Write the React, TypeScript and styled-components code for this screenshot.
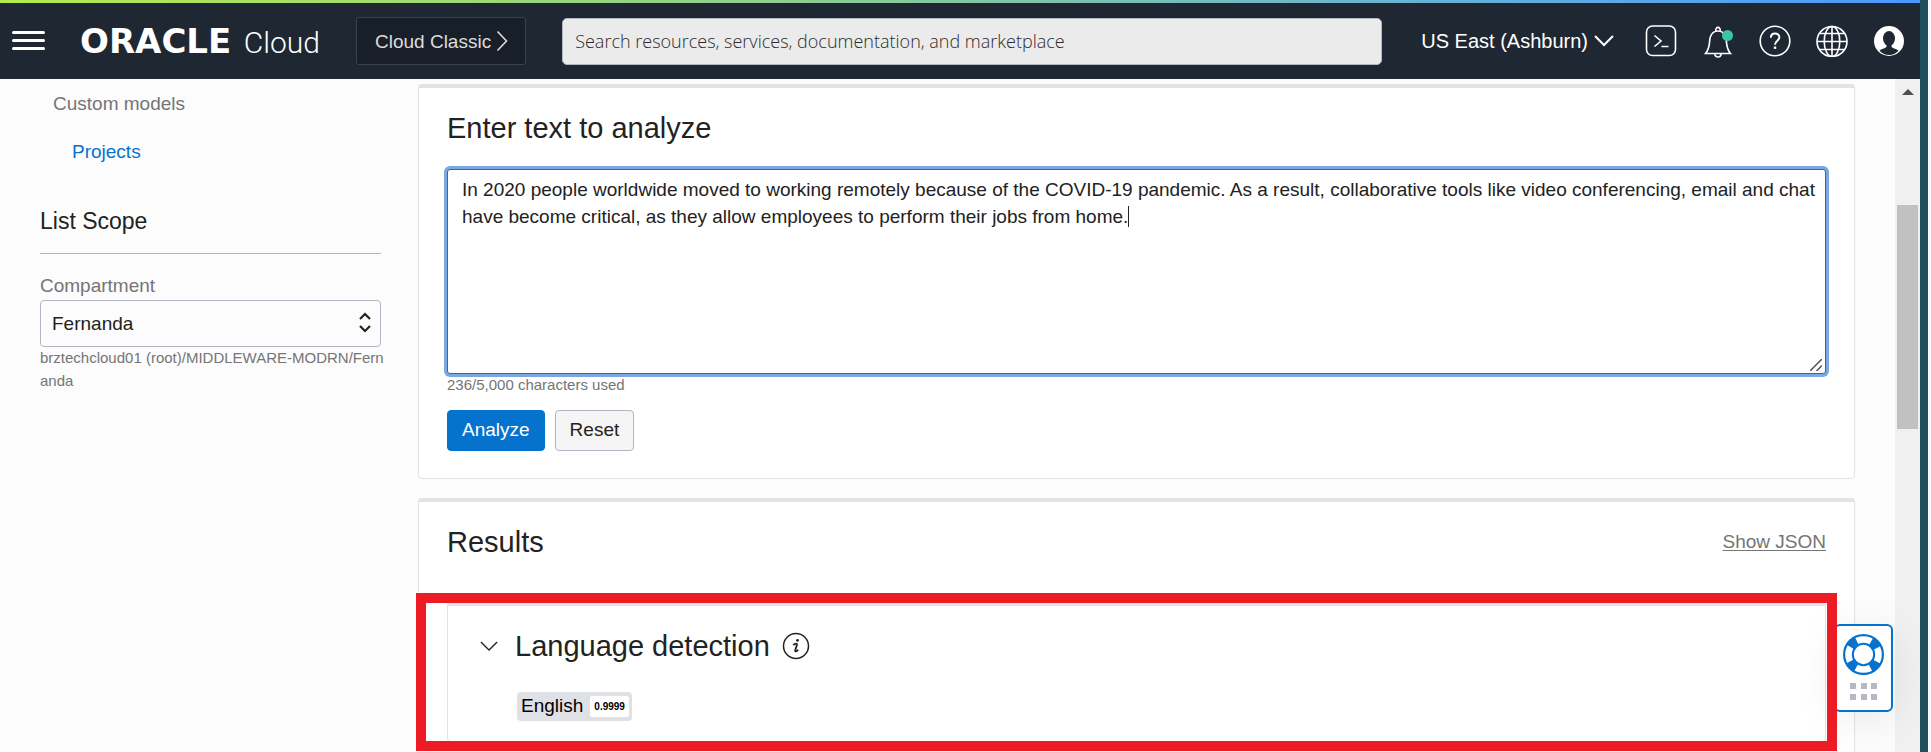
import React, { useState } from "react";
import styled, { createGlobalStyle } from "styled-components";

const color = {
  header: "#1e2732",
  page: "#fcfcfc",
  ink: "#222222",
  muted: "#757575",
  line: "#e2e2e7",
  field: "#b3b6c2",
  blue: "#0572ce",
  marker: "#ed1c24",
};

const GlobalStyle = createGlobalStyle`
  * { box-sizing: border-box; }
  body {
    margin: 0;
    background: ${color.page};
    color: ${color.ink};
    font-family: "Liberation Sans", Arial, sans-serif;
    font-size: 19px;
    line-height: 27px;
  }
  button, input, select, textarea { font: inherit; color: inherit; margin: 0; }
  h1, h2, h3, p { margin: 0; font-weight: 400; }
`;

const Screen = styled.div`
  display: flex;
  height: 100vh;
  overflow: hidden;
`;

const Browser = styled.div`
  flex: 1;
  min-width: 0;
  display: flex;
  flex-direction: column;
`;

const Desktop = styled.div`
  width: 11px;
  background: #fdfdfd;
  border-left: 8px solid #20505b;
`;

const LoadingStripe = styled.div`
  height: 3px;
  flex: none;
  background: linear-gradient(90deg, #b5ea4e, #8acb98 45%, #66b0d8 76%, #4a98fc);
`;

const Header = styled.header`
  flex: none;
  display: flex;
  align-items: center;
  height: 76px;
  padding: 0 15px 0 12px;
  background: ${color.header};
  color: #fff;
`;

const IconButton = styled.button`
  display: flex;
  width: 32px;
  height: 32px;
  padding: 0;
  border: 0;
  background: none;
  color: #fff;
  cursor: pointer;
`;

const MenuButton = styled(IconButton)`
  width: 33px;
  margin-right: 35px;
`;

const Brand = styled.a`
  display: flex;
  align-items: baseline;
  justify-content: space-between;
  width: 240px;
  height: 36px;
  line-height: 36px;
  color: #fff;
  text-decoration: none;
`;

const BrandName = styled.span`
  font-family: "DejaVu Sans", sans-serif;
  font-weight: 700;
  font-size: 34px;
`;

const BrandProduct = styled.span`
  font-family: Roboto, sans-serif;
  font-weight: 300;
  font-size: 30px;
`;

const ClassicButton = styled.button`
  display: flex;
  align-items: center;
  gap: 5px;
  height: 48px;
  margin: 0 36px;
  padding: 0 17px 0 18px;
  border: 1px solid #3a424b;
  border-radius: 3px;
  background: #191f28;
  color: #dcdcdc;
  white-space: nowrap;
`;

const Search = styled.input`
  flex: 1;
  min-width: 0;
  height: 47px;
  padding: 0 12px;
  border: 1px solid #b3b8c0;
  border-radius: 5px;
  background: #ebebeb;
  font-family: "Open Sans", sans-serif;
  font-size: 18px;
  font-weight: 300;
  &::placeholder { color: #2c2c2c; opacity: 1; }
`;

const RegionButton = styled.button`
  display: flex;
  align-items: center;
  gap: 6px;
  margin: 0 31px 0 39px;
  padding: 0;
  border: 0;
  background: none;
  color: #fff;
  font-size: 20px;
  white-space: nowrap;
`;

const Tools = styled.nav`
  display: flex;
  gap: 25px;
`;

const Body = styled.div`
  flex: 1;
  min-height: 0;
  display: flex;
`;

const Sidebar = styled.aside`
  flex: none;
  width: 410px;
  padding: 11px 29px 0 40px;
`;

const NavGroup = styled.p`
  padding-left: 13px;
  color: ${color.muted};
`;

const NavLink = styled.a`
  display: block;
  margin: 21px 0 0 32px;
  color: ${color.blue};
  text-decoration: none;
`;

const ScopeTitle = styled.h3`
  margin-top: 43px;
  padding-bottom: 18px;
  border-bottom: 1px solid ${color.field};
  font-size: 23px;
`;

const FieldLabel = styled.label`
  display: block;
  margin: 18px 0 1px;
  color: ${color.muted};
`;

const SelectWrap = styled.div`
  position: relative;
  svg {
    position: absolute;
    right: 10px;
    top: 12px;
    pointer-events: none;
  }
`;

const Select = styled.select`
  display: block;
  width: 100%;
  height: 47px;
  padding: 0 11px;
  border: 1px solid ${color.field};
  border-radius: 4px;
  background: ${color.page};
  appearance: none;
`;

const Hint = styled.p`
  margin-top: -1px;
  font-size: 15px;
  line-height: 23px;
  color: ${color.muted};
`;

const PathHint = styled(Hint)`
  margin-right: -5px;
  word-break: break-all;
`;

const Main = styled.main`
  flex: 1;
  min-width: 0;
  display: flex;
  flex-direction: column;
  gap: 19px;
  padding: 5px 40px 0 8px;
  overflow: hidden;
`;

const Panel = styled.section`
  flex: none;
  padding: 22px 28px 27px;
  border: 1px solid ${color.line};
  border-top-width: 4px;
  border-radius: 4px;
  background: #fff;
`;

const PanelHead = styled.div`
  display: flex;
  align-items: center;
  justify-content: space-between;
`;

const Title = styled.h2`
  font-size: 29px;
  line-height: 36px;
`;

const EditorWrap = styled.div`
  position: relative;
  margin-top: 23px;
`;

const Editor = styled.textarea`
  display: block;
  width: 100%;
  height: 205px;
  padding: 6px 0 6px 14px;
  border: 1px solid #146fcd;
  border-radius: 3px;
  outline: 0;
  box-shadow: 0 0 0 3px #7aa9e2;
  background: #fff;
  resize: vertical;
  &::-webkit-resizer { background: transparent; }
`;

const Caret = styled.span`
  position: absolute;
  left: 681px;
  top: 37px;
  width: 1px;
  height: 21px;
  background: ${color.ink};
`;

const ResizeMark = styled.svg`
  position: absolute;
  right: 4px;
  bottom: 3px;
  pointer-events: none;
`;

const Actions = styled.div`
  display: flex;
  gap: 10px;
  margin-top: 14px;
`;

const Button = styled.button<{ $primary?: boolean }>`
  height: 41px;
  padding: 0 14px 2px;
  border: 1px solid ${(p) => (p.$primary ? color.blue : color.field)};
  border-radius: 4px;
  background: ${(p) => (p.$primary ? color.blue : "#f5f5f5")};
  color: ${(p) => (p.$primary ? "#fff" : color.ink)};
`;

const JsonLink = styled.a`
  padding-bottom: 2px;
  color: ${color.muted};
  text-underline-offset: 2px;
`;

const ResultCard = styled.article`
  position: relative;
  margin-top: 42px;
  padding: 22px 32px 20px;
  border: 1px solid ${color.line};
  border-top-width: 4px;
  border-radius: 4px;
`;

const Marker = styled.div`
  position: absolute;
  z-index: 3;
  inset: -13px -12px -10px -32px;
  border: 10px solid ${color.marker};
  pointer-events: none;
`;

const ResultHead = styled.div`
  display: flex;
  align-items: center;
  height: 36px;
`;

const PlainButton = styled.button`
  display: flex;
  padding: 0;
  border: 0;
  background: none;
`;

const ResultTitle = styled(Title)`
  margin: 0 12px 0 17px;
`;

const Tag = styled.div`
  display: flex;
  align-items: center;
  gap: 7px;
  width: max-content;
  height: 29px;
  margin: 28px 0 0 37px;
  padding: 0 3px 0 4px;
  border-radius: 4px;
  background: #e0e1e6;
  color: #000;
`;

const TagName = styled.span`
  padding-bottom: 2px;
`;

const Score = styled.span`
  padding: 0 4px;
  border-radius: 2px;
  background: #fff;
  font-size: 10px;
  font-weight: 700;
  line-height: 21px;
`;

const Scrollbar = styled.div`
  flex: none;
  width: 25px;
  padding: 10px 2px 0;
  background: #f0f0f0;
  svg { display: block; margin: 0 auto; }
`;

const Thumb = styled.div`
  height: 224px;
  margin-top: 110px;
  background: #c1c1c1;
`;

const SupportButton = styled.button`
  position: fixed;
  z-index: 1;
  right: 38px;
  top: 624px;
  display: flex;
  flex-direction: column;
  align-items: center;
  gap: 8px;
  width: 59px;
  height: 88px;
  padding: 8px 0 0;
  border: 2px solid ${color.blue};
  border-radius: 6px;
  background: #fff;
  color: ${color.blue};
  box-shadow: 0 8px 40px rgba(0, 0, 0, 0.08);
`;

const stroke = { fill: "none", stroke: "currentColor" } as const;

const MenuIcon = () => (
  <svg width="33" height="32" viewBox="0 0 33 32" {...stroke} strokeWidth="3" strokeLinecap="round">
    <path d="M1.5 7.5h30M1.5 15.5h30M1.5 23.5h30" />
  </svg>
);

const ChevronRight = () => (
  <svg width="12" height="22" viewBox="0 0 12 22" {...stroke} strokeWidth="1.6">
    <path d="M1.5 1.5L10.500 11L1.500 20.500" />
  </svg>
);

const ChevronDown = ({ w, weight }: { w: number; weight: number }) => (
  <svg width={w} height={w / 2 + 2} viewBox="0 0 20 12" {...stroke} strokeWidth={weight}>
    <path d="M1 1l9 9l9-9" />
  </svg>
);

const TerminalIcon = () => (
  <svg width="32" height="32" viewBox="0 0 32 32" {...stroke} strokeWidth="1.6">
    <rect x="1.500" y="1" width="29" height="29.500" rx="6" />
    <path d="M9.500 10.500l6.500 5.500l-6.500 5.500M16.500 21.500h7" />
  </svg>
);

const BellIcon = () => (
  <svg width="32" height="32" viewBox="0 0 32 32" overflow="visible" {...stroke} strokeWidth="1.6">
    <path d="M3.500 28.500C9 22 6.500 17 8.500 11.500C9.800 8 12 6 16 6C20 6 22.200 8 23.500 11.500C25.500 17 23 22 28.500 28.500Z" />
    <path d="M13.800 6.300C13 1 19 1 18.200 6.300M12.800 28.500C13 33.200 19 33.200 19.200 28.500" />
    <circle cx="25.500" cy="10.500" r="5.500" fill="#39c5a7" stroke="none" />
  </svg>
);

const HelpIcon = () => (
  <svg width="32" height="32" viewBox="0 0 32 32" {...stroke} strokeWidth="1.6">
    <circle cx="16" cy="16" r="14.800" />
    <path d="M11.800 12.800C11.800 7 20.400 7.200 20.400 12.300C20.400 15.800 16 15.800 16 19.800" strokeWidth="1.900" />
    <path d="M16 21.500v2.400" strokeWidth="2.400" />
  </svg>
);

const GlobeIcon = () => (
  <svg width="32" height="32" viewBox="0 0 32 32" {...stroke} strokeWidth="1.600">
    <circle cx="16" cy="16.500" r="15" />
    <ellipse cx="16" cy="16.500" rx="7.800" ry="15" />
    <path d="M16 1.500v30M1 16.500h30M4 8.500h24M4 24.500h24" />
  </svg>
);

const UserIcon = () => (
  <svg width="32" height="32" viewBox="0 0 32 32">
    <circle cx="16" cy="16" r="15" fill="#fff" />
    <ellipse cx="16" cy="13.500" rx="6" ry="7.500" fill={color.header} />
    <path d="M13.600 18h4.800v3.500C20 24 23.500 23.500 25.500 25.800C20.500 31.400 11.500 31.400 6.500 25.800C8.500 23.500 12 24 13.600 21.500Z" fill={color.header} />
  </svg>
);

const SortIcon = () => (
  <svg width="12" height="21" viewBox="0 0 12 21" {...stroke} strokeWidth="2.200">
    <path d="M1 7l5-5l5 5M1 14l5 5l5-5" />
  </svg>
);

const InfoIcon = () => (
  <svg width="28" height="28" viewBox="0 0 28 28" {...stroke} strokeWidth="1.500">
    <circle cx="14" cy="14" r="12.500" />
    <path d="M11.300 13.200C12.500 11.800 15.300 10.800 15 12.700L13.200 18.300C12.900 20.200 14.900 19.400 16.200 17.800" strokeWidth="1.800" />
    <circle cx="15.500" cy="8.300" r="1.400" fill="currentColor" stroke="none" />
  </svg>
);

const LifebuoyIcon = () => (
  <svg width="41" height="41" viewBox="0 0 41 41" {...stroke}>
    <circle cx="20.500" cy="20.500" r="15.500" strokeWidth="9" strokeDasharray="9 15.350" strokeDashoffset="-7.700" />
    <circle cx="20.500" cy="20.500" r="19.400" strokeWidth="2.200" />
    <circle cx="20.500" cy="20.500" r="10.700" strokeWidth="2" />
  </svg>
);

const GripIcon = () => (
  <svg width="27" height="17" viewBox="0 0 27 17" fill="#b5b9c2">
    {[0, 11].map((y) => [0, 11, 21].map((x) => <rect key={`${x}-${y}`} x={x} y={y} width="6" height="6" />))}
  </svg>
);

const sample =
  "In 2020 people worldwide moved to working remotely because of the COVID-19 pandemic. As a result, collaborative tools like video conferencing, email and chat have become critical, as they allow employees to perform their jobs from home.";

export default function App() {
  const [text, setText] = useState(sample);
  return (
    <Screen>
      <GlobalStyle />
      <Browser>
        <LoadingStripe />
        <Header>
          <MenuButton aria-label="Open navigation menu"><MenuIcon /></MenuButton>
          <Brand href="#home">
            <BrandName>ORACLE</BrandName>
            <BrandProduct>Cloud</BrandProduct>
          </Brand>
          <ClassicButton>Cloud Classic<ChevronRight /></ClassicButton>
          <Search type="search" aria-label="Search" placeholder="Search resources, services, documentation, and marketplace" />
          <RegionButton>US East (Ashburn)<ChevronDown w={20} weight={2} /></RegionButton>
          <Tools aria-label="Tools">
            <IconButton aria-label="Developer tools"><TerminalIcon /></IconButton>
            <IconButton aria-label="Announcements"><BellIcon /></IconButton>
            <IconButton aria-label="Help"><HelpIcon /></IconButton>
            <IconButton aria-label="Language"><GlobeIcon /></IconButton>
            <IconButton aria-label="Profile"><UserIcon /></IconButton>
          </Tools>
        </Header>
        <Body>
          <Sidebar>
            <NavGroup>Custom models</NavGroup>
            <NavLink href="#projects">Projects</NavLink>
            <ScopeTitle>List Scope</ScopeTitle>
            <FieldLabel htmlFor="compartment">Compartment</FieldLabel>
            <SelectWrap>
              <Select id="compartment"><option>Fernanda</option></Select>
              <SortIcon />
            </SelectWrap>
            <PathHint>brztechcloud01 (root)/MIDDLEWARE-MODRN/Fernanda</PathHint>
          </Sidebar>
          <Main>
            <Panel>
              <Title as="label" htmlFor="source">Enter text to analyze</Title>
              <EditorWrap>
                <Editor id="source" spellCheck={false} value={text} onChange={(e) => setText(e.target.value)} />
                <Caret />
                <ResizeMark width="12" height="12" viewBox="0 0 12 12" stroke="#505050" strokeWidth="1.500">
                  <path d="M0 12L12 0M6.500 12L12 6.500" />
                </ResizeMark>
              </EditorWrap>
              <Hint>236/5,000 characters used</Hint>
              <Actions>
                <Button $primary>Analyze</Button>
                <Button onClick={() => setText("")}>Reset</Button>
              </Actions>
            </Panel>
            <Panel>
              <PanelHead>
                <Title>Results</Title>
                <JsonLink href="#json">Show JSON</JsonLink>
              </PanelHead>
              <ResultCard>
                <ResultHead>
                  <PlainButton aria-label="Collapse"><ChevronDown w={18} weight={1.5} /></PlainButton>
                  <ResultTitle>Language detection</ResultTitle>
                  <PlainButton aria-label="About language detection"><InfoIcon /></PlainButton>
                </ResultHead>
                <Tag><TagName>English</TagName><Score>0.9999</Score></Tag>
                <Marker />
              </ResultCard>
            </Panel>
          </Main>
          <Scrollbar aria-hidden="true">
            <svg width="12" height="6" viewBox="0 0 12 6"><path d="M0 6L6 0L12 6Z" fill="#505050" /></svg>
            <Thumb />
          </Scrollbar>
        </Body>
      </Browser>
      <Desktop />
      <SupportButton aria-label="Support"><LifebuoyIcon /><GripIcon /></SupportButton>
    </Screen>
  );
}
